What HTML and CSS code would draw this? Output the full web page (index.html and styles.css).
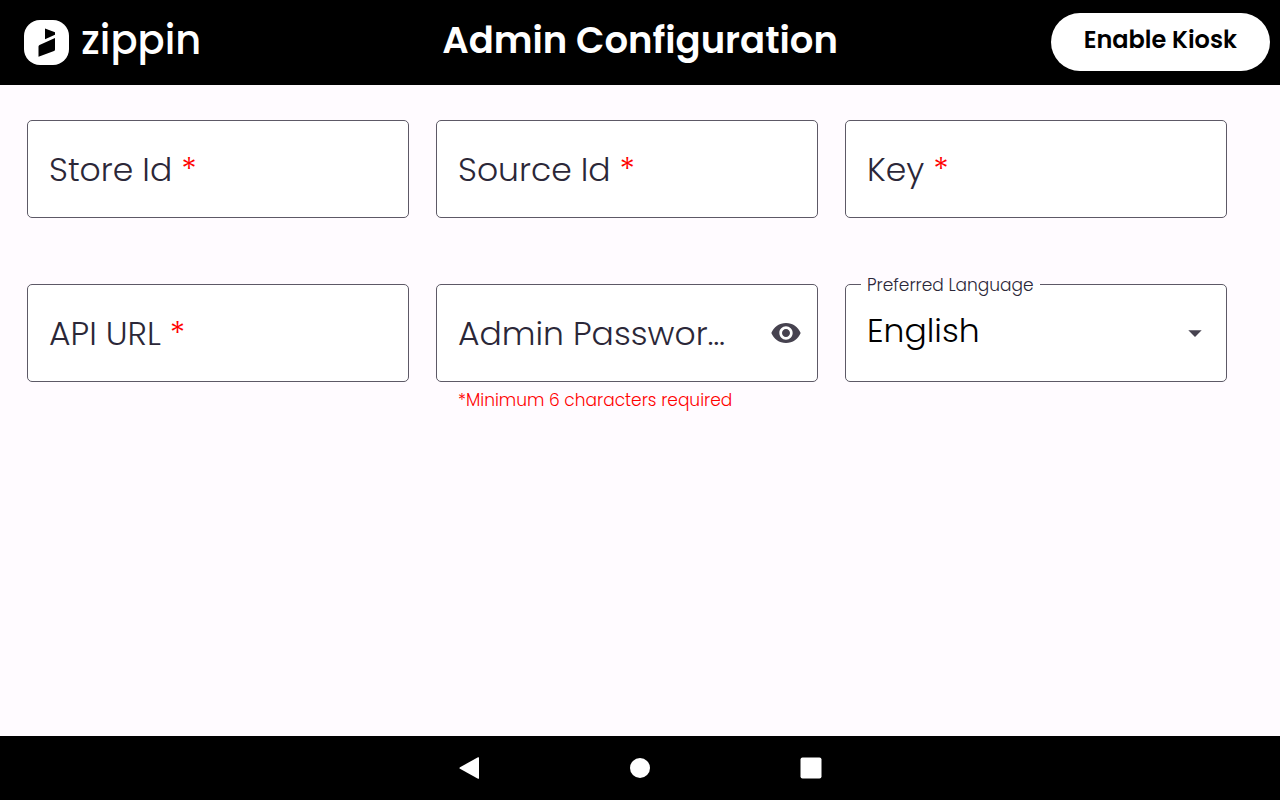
FILE: index.html
```html
<!DOCTYPE html>
<html lang="en">
<head>
  <meta charset="UTF-8" />
  <meta name="viewport" content="width=device-width, initial-scale=1.0" />
  <title>Admin Configuration</title>
  <link rel="stylesheet" href="styles.css">
</head>
<body>
  <header class="topbar">
    <div class="brand">
      <svg class="brand-mark" viewBox="0 0 45 45" aria-hidden="true">
        <rect width="45" height="45" rx="16" fill="#fff"/>
        <path d="M21 8.500 31 12.200V14.800L21 19.300zM31 18V29.500Q31 30.500 30 31L14.500 36.800V26.500Q14.500 25.500 15.500 25z" fill="#000"/>
      </svg>
      <span class="brand-name">zippin</span>
    </div>
    <h1 class="title">Admin Configuration</h1>
    <button type="button" class="kiosk-btn">Enable Kiosk</button>
  </header>

  <main class="content">
    <form class="config-form">
      <div class="field">
        <div class="box">
          <input type="text" id="storeId" class="box-input">
          <label for="storeId" class="box-label">Store Id <span class="required">*</span></label>
        </div>
      </div>
      <div class="field">
        <div class="box">
          <input type="text" id="sourceId" class="box-input">
          <label for="sourceId" class="box-label">Source Id <span class="required">*</span></label>
        </div>
      </div>
      <div class="field">
        <div class="box">
          <input type="text" id="key" class="box-input">
          <label for="key" class="box-label">Key <span class="required">*</span></label>
        </div>
      </div>
      <div class="field">
        <div class="box">
          <input type="text" id="apiUrl" class="box-input">
          <label for="apiUrl" class="box-label">API URL <span class="required">*</span></label>
        </div>
      </div>
      <div class="field">
        <div class="box">
          <input type="password" id="adminPassword" class="box-input" aria-describedby="passwordHint">
          <label for="adminPassword" class="box-label with-icon">Admin Password <span class="required">*</span></label>
          <button type="button" class="eye-btn" aria-label="Show password">
            <svg width="32" height="32" viewBox="0 0 24 24" fill="currentColor" aria-hidden="true">
              <path d="M12 4.500C7 4.500 2.730 7.610 1 12c1.730 4.390 6 7.500 11 7.500s9.270-3.110 11-7.500c-1.730-4.390-6-7.500-11-7.500zM12 17c-2.760 0-5-2.240-5-5s2.240-5 5-5 5 2.240 5 5-2.240 5-5 5zm0-8c-1.660 0-3 1.340-3 3s1.340 3 3 3 3-1.340 3-3-1.340-3-3-3z"/>
            </svg>
          </button>
        </div>
        <p class="hint" id="passwordHint">*Minimum 6 characters required</p>
      </div>
      <div class="field">
        <fieldset class="select-box">
          <legend><label for="language">Preferred Language</label></legend>
          <select id="language">
            <option>English</option>
          </select>
          <svg class="arrow" width="32" height="32" viewBox="0 0 24 24" fill="currentColor" aria-hidden="true">
            <path d="M7 10l5 5 5-5z"/>
          </svg>
        </fieldset>
      </div>
    </form>
  </main>

  <nav class="navbar">
    <button type="button" class="nav-btn" aria-label="Back">
      <svg width="24" height="24" viewBox="0 0 24 24" fill="#fff"><path d="M21 1.300Q22 0.800 22 1.800V22.200Q22 23.200 21 22.700L3 12.800Q1.800 12 3 11.200z"/></svg>
    </button>
    <button type="button" class="nav-btn" aria-label="Home">
      <svg width="24" height="24" viewBox="0 0 24 24" fill="#fff"><circle cx="12" cy="12" r="10"/></svg>
    </button>
    <button type="button" class="nav-btn" aria-label="Overview">
      <svg width="24" height="24" viewBox="0 0 24 24" fill="#fff"><rect x="1.500" y="1.500" width="21" height="21" rx="2"/></svg>
    </button>
  </nav>
</body>
</html>
```
FILE: styles.css
```css
:root {
  --bg-color: #fffbff;
  --text-color: #1c1a22;
  --label-color: #2b2738;
  --border-color: #5d5966;
  --icon-color: #46424f;
  --error-color: #f00;
}

* {
  box-sizing: border-box;
}
body {
  font-family: Poppins, Inter, sans-serif;
  background-color: var(--bg-color);
  color: var(--text-color);
  margin: 0;
  min-height: 100vh;
  display: flex;
  flex-direction: column;
}
button {
  font-family: inherit;
  border: none;
  padding: 0;
  cursor: pointer;
}

.topbar {
  display: grid;
  grid-template-columns: 1fr auto 1fr;
  align-items: center;
  padding: 13px 10px 14px;
  background: #000;
  color: #fff;
}
.brand {
  display: flex;
  align-items: center;
  gap: 12px;
  padding-left: 14px;
}
.brand-mark {
  width: 45px;
  height: 45px;
}
.brand-name {
  font-size: 40px;
  line-height: 54px;
  font-weight: 500;
  padding-bottom: 4px;
}
.title {
  margin: 0;
  padding-bottom: 4px;
  font-size: 37px;
  line-height: 54px;
  font-weight: 600;
}
.kiosk-btn {
  justify-self: end;
  padding: 9px 33px 13px;
  border-radius: 30px;
  background: #fff;
  color: #000;
  font-size: 24px;
  line-height: 36px;
  font-weight: 600;
}

.content {
  flex: 1;
  padding: 35px 53px 35px 27px;
}
.config-form {
  display: grid;
  grid-template-columns: repeat(3, 1fr);
  gap: 66px 27px;
}
.field {
  min-width: 0;
}
.box {
  display: grid;
  grid-template-columns: minmax(0, 1fr);
  align-items: center;
}
/* label and icon share the input's cell */
.box > * {
  grid-area: 1 / 1;
}
.box-input {
  width: 100%;
  height: 98px;
  padding: 0 22px;
  border: 1px solid var(--border-color);
  border-radius: 5px;
  background: #fff;
  font: 300 33px Poppins, Inter, sans-serif;
  color: var(--text-color);
}
.box-label {
  margin: 0 22px;
  padding-top: 2px;
  font-size: 33px;
  line-height: 54px;
  font-weight: 300;
  color: var(--label-color);
  white-space: nowrap;
  overflow: hidden;
  text-overflow: ellipsis;
  pointer-events: none;
}
.box-label.with-icon {
  margin-right: 80px;
}
.required {
  color: var(--error-color);
}
.eye-btn {
  justify-self: end;
  margin-right: 16px;
  height: 32px;
  background: none;
  color: var(--icon-color);
}
.hint {
  margin: 4px 22px 0;
  font-size: 17px;
  line-height: 28px;
  font-weight: 300;
  color: var(--error-color);
}

.select-box {
  display: grid;
  grid-template-rows: 70px;
  align-items: center;
  min-width: 0;
  height: 112px;
  margin: -14px 0 0;
  padding: 0 15px;
  border: 1px solid var(--border-color);
  border-radius: 5px;
  background: #fff;
}
.select-box legend {
  padding: 2px 6px 0;
  font-size: 17px;
  line-height: 26px;
  font-weight: 300;
  color: var(--label-color);
}
.select-box select {
  grid-area: 1 / 1;
  width: 100%;
  height: 64px;
  padding: 0 6px 6px;
  border: none;
  background: none;
  appearance: none;
  font: 300 33px Poppins, Inter, sans-serif;
  color: #000;
}
.arrow {
  grid-area: 1 / 1;
  justify-self: end;
  color: var(--icon-color);
  pointer-events: none;
}

.navbar {
  display: flex;
  justify-content: center;
  align-items: center;
  gap: 147px;
  height: 64px;
  background: #000;
}
.nav-btn {
  display: flex;
  background: none;
}
```
